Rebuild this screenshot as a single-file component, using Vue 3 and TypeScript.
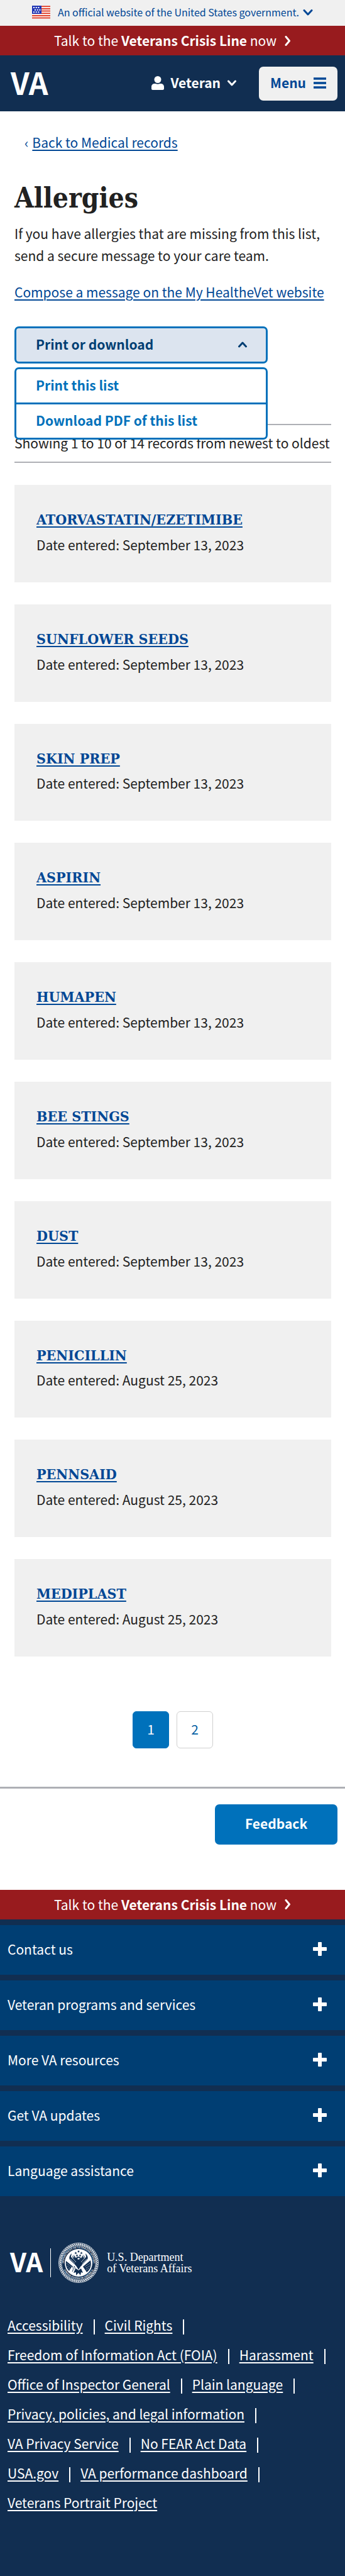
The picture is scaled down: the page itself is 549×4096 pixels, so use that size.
<script setup lang="ts">
import { ref } from 'vue'

interface Allergy { name: string; date: string }

const allergies: Allergy[] = [
  { name: 'ATORVASTATIN/EZETIMIBE', date: 'September 13, 2023' },
  { name: 'SUNFLOWER SEEDS', date: 'September 13, 2023' },
  { name: 'SKIN PREP', date: 'September 13, 2023' },
  { name: 'ASPIRIN', date: 'September 13, 2023' },
  { name: 'HUMAPEN', date: 'September 13, 2023' },
  { name: 'BEE STINGS', date: 'September 13, 2023' },
  { name: 'DUST', date: 'September 13, 2023' },
  { name: 'PENICILLIN', date: 'August 25, 2023' },
  { name: 'PENNSAID', date: 'August 25, 2023' },
  { name: 'MEDIPLAST', date: 'August 25, 2023' },
]

const sections: string[] = [
  'Contact us',
  'Veteran programs and services',
  'More VA resources',
  'Get VA updates',
  'Language assistance',
]

const legalLinks: string[] = [
  'Accessibility',
  'Civil Rights',
  'Freedom of Information Act (FOIA)',
  'Harassment',
  'Office of Inspector General',
  'Plain language',
  'Privacy, policies, and legal information',
  'VA Privacy Service',
  'No FEAR Act Data',
  'USA.gov',
  'VA performance dashboard',
  'Veterans Portrait Project',
]

const menuOpen = ref(true)
const page = ref(1)

// Angles of the rope strands around the seal
const strands: number[] = Array.from({ length: 60 }, (_, i) => i * 6)
// Centres of the five stars at the top of the seal
const stars: [number, number][] = [[32, 14], [27.5, 16.5], [36.5, 16.5], [29.5, 20.5], [34.5, 20.5]]
</script>

<template>
  <div class="page">
    <button class="gov" type="button">
      <svg class="flag" viewBox="0 0 29 21" aria-hidden="true">
        <rect width="29" height="21" fill="#fff" />
        <path d="M0 1.200h29M0 4.900h29M0 8.500h29M0 12.200h29M0 15.900h29M0 19.500h29" stroke="#e0402a" stroke-width="2" />
        <rect width="15" height="13" fill="#1f35b4" />
        <path d="M2 3h10M4 6.700h10M2 10.300h10" stroke="#fff" stroke-width="2" stroke-dasharray="2 1.700" />
      </svg>
      <span>An official website of the United States government.</span>
      <svg class="chev" viewBox="0 0 16 10" aria-hidden="true"><path d="M2 1.500l6 6.500 6-6.500" /></svg>
    </button>

    <a class="crisis" href="#">
      <span>Talk to the <strong>Veterans Crisis Line</strong> now</span>
      <svg viewBox="0 0 10 16" aria-hidden="true"><path d="M2 1.500l5.500 6.500-5.500 6.500" /></svg>
    </a>

    <header class="top">
      <a class="va" href="#">VA</a>
      <button class="user" type="button">
        <svg class="person" viewBox="0 0 20 22" aria-hidden="true">
          <circle cx="10" cy="5.500" r="5.500" />
          <path d="M5 12h1.500c2.200 1.100 4.800 1.100 7 0H15c3 0 5 2.300 5 5v3c0 1.200-.8 2-2 2H2c-1.200 0-2-.8-2-2v-3c0-2.700 2-5 5-5z" />
        </svg>
        <span>Veteran</span>
        <svg class="chev" viewBox="0 0 16 10" aria-hidden="true"><path d="M2.500 2l5.500 6 5.500-6" /></svg>
      </button>
      <button class="menu" type="button">
        <span>Menu</span>
        <svg viewBox="0 0 20 18" aria-hidden="true"><path d="M0 2h20M0 9h20M0 16h20" stroke-width="3.400" /></svg>
      </button>
    </header>

    <main class="main">
      <nav class="crumb">
        <span aria-hidden="true">‹</span>
        <a href="#">Back to Medical records</a>
      </nav>
      <h1>Allergies</h1>
      <p class="intro">If you have allergies that are missing from this list, send a secure message to your care team.</p>
      <p class="compose"><a href="#">Compose a message on the My HealtheVet website</a></p>

      <div class="dropdown">
        <button class="toggle" type="button" :aria-expanded="menuOpen" @click="menuOpen = !menuOpen">
          <span>Print or download</span>
          <svg class="chev" viewBox="0 0 16 10" aria-hidden="true"><path d="M2.500 8l5.500-6 5.500 6" /></svg>
        </button>
        <ul v-if="menuOpen" class="options">
          <li><button type="button">Print this list</button></li>
          <li><button type="button">Download PDF of this list</button></li>
        </ul>
      </div>

      <p class="showing">Showing 1 to 10 of 14 records from newest to oldest</p>

      <ul class="cards">
        <li v-for="a in allergies" :key="a.name" class="card">
          <h2><a href="#">{{ a.name }}</a></h2>
          <p>Date entered: {{ a.date }}</p>
        </li>
      </ul>

      <nav class="pages" aria-label="Pagination">
        <button v-for="n in 2" :key="n" type="button" :class="{ current: n === page }" @click="page = n">{{ n }}</button>
      </nav>
    </main>

    <div class="feedback"><button type="button">Feedback</button></div>

    <a class="crisis" href="#">
      <span>Talk to the <strong>Veterans Crisis Line</strong> now</span>
      <svg viewBox="0 0 10 16" aria-hidden="true"><path d="M2 1.500l5.500 6.500-5.500 6.500" /></svg>
    </a>

    <footer class="footer">
      <ul class="sections">
        <li v-for="s in sections" :key="s">
          <button type="button">
            <span>{{ s }}</span>
            <svg viewBox="0 0 22 22" aria-hidden="true">
              <rect x="8" width="6" height="22" rx="1" />
              <rect y="8" width="22" height="6" rx="1" />
            </svg>
          </button>
        </li>
      </ul>

      <a class="brand" href="#">
        <span class="va small">VA</span>
        <span class="bar"></span>
        <svg class="seal" viewBox="0 0 64 64" aria-hidden="true">
          <defs>
            <path id="arc-top" d="M9.100 37A23.440 23.440 0 1 1 54.900 37" />
            <path id="arc-bottom" d="M7 39A25.960 25.960 0 0 0 57 39" />
            <path id="star" d="M0-2.200L.6-.7 2.100-.7.9.3 1.300 1.800 0 .9-1.300 1.800-.9.3-2.100-.7-.6-.7z" />
          </defs>
          <circle cx="32" cy="32" r="31.500" fill="none" stroke="#fff" stroke-width=".8" />
          <g stroke="#fff" stroke-width="1.500">
            <line v-for="t in strands" :key="t" x1="31" y1="1.400" x2="33.400" y2="4.200" :transform="`rotate(${t} 32 32)`" />
          </g>
          <circle cx="32" cy="32" r="27.200" fill="none" stroke="#fff" stroke-width=".7" />
          <text class="rim"><textPath href="#arc-top" startOffset="50%">DEPARTMENT OF VETERANS AFFAIRS</textPath></text>
          <text class="rim"><textPath href="#arc-bottom" startOffset="50%">UNITED STATES OF AMERICA</textPath></text>
          <circle cx="32" cy="32" r="22" fill="#fff" />
          <g fill="#112e51">
            <use v-for="s in stars" :key="s.join()" href="#star" :x="s[0]" :y="s[1]" />
            <path d="M21 17c-4 4-5 8-2 11l8 8 5 3 2-4-4-6c-1-4-4-7-6-10l1 6-3-5 1 6-3-4z" />
            <path d="M43 17c4 4 5 8 2 11l-7 8-6 3-2-4 4-6c1-4 4-7 6-10l-1 6 3-5-1 6 3-4z" />
            <path d="M28 24c3-3 7-2 8 1l-2 4 3 6-5 8-5-8 3-6-4-2z" />
            <path d="M12 29l10 8-5 8c-4-4-6-10-5-16z" />
            <path d="M51 28l-12 10 6 9c6-4 8-12 6-19z" />
            <path d="M28 41l4 3 4-3 3 7-3-1-1 5-3-4-4 4v-5l-4 1z" />
          </g>
          <g fill="none" stroke="#fff" stroke-width=".7">
            <path d="M20 22l8 9M19 26l7 7M44 22l-8 9M45 26l-7 7" />
            <path d="M13 33l7 5M14 37l5 4M16 41l3 2M50 33l-8 5M50 37l-7 4M48 41l-5 3" stroke-dasharray="1 1" />
          </g>
          <path d="M13 25l13 11M50 24L38 36" stroke="#fff" stroke-width="2" stroke-linecap="round" />
          <path d="M30 25l3-1 1 2-3 1z" fill="#fff" />
          <path d="M22 37c2 3 2 6 0 9M25 37c2 4 2 7 0 10" fill="none" stroke="#112e51" stroke-width="1" />
        </svg>
        <span class="dept">U.S. Department<br />of Veterans Affairs</span>
      </a>

      <ul class="legal">
        <li v-for="l in legalLinks" :key="l"><a href="#">{{ l }}</a></li>
      </ul>
    </footer>
  </div>
</template>

<style>
html { background: #fff; }
body { margin: 0; }
</style>

<style scoped>
.page {
  font-family: "Noto Sans CJK SC", "Noto Sans", sans-serif;
  font-size: 21px;
  line-height: 35px;
  color: #212121;
  background: #fff;
}
* { box-sizing: border-box; }
button { font: inherit; color: inherit; border: 0; background: none; padding: 0 0 2px; cursor: pointer; }
ul { list-style: none; margin: 0; padding: 0; }
p, h1, h2 { margin: 0; }
a { color: #004795; text-decoration-thickness: 2px; text-underline-offset: 3px; }
svg { display: block; flex: none; }
.chev { width: 16px; height: 10px; fill: none; stroke: currentColor; stroke-width: 3; stroke-linecap: round; stroke-linejoin: round; }

.gov {
  width: 100%; height: 41px; display: flex; align-items: center; justify-content: center;
  background: #f0f0f0; color: #004795; font-size: 16px; gap: 6px;
}
.flag { width: 29px; height: 21px; margin-right: 6px; }

.crisis {
  height: 47px; display: flex; align-items: center; justify-content: center; gap: 13px;
  background: #981b1e; color: #fff; text-decoration: none;
}
.crisis svg { width: 10px; height: 16px; fill: none; stroke: #fff; stroke-width: 3; stroke-linecap: round; stroke-linejoin: round; }

.top { height: 89px; display: flex; align-items: center; padding: 0 12px 0 17px; background: #112e51; color: #fff; }
.va { padding-bottom: 6px; font-weight: 700; font-size: 48px; line-height: 48px; color: #fff; text-decoration: none; }
.user { display: flex; align-items: center; gap: 10px; margin-left: auto; margin-right: 35px; font-weight: 700; }
.person { width: 20px; height: 22px; fill: #fff; }
.menu {
  height: 54px; display: flex; align-items: center; gap: 12px; padding: 0 18px 2px;
  border-radius: 7px; background: #f0f0f0; color: #004795; font-weight: 700;
}
.menu svg { width: 20px; height: 18px; stroke: currentColor; }

.main { padding: 32px 22px 0 23px; }
.crumb { display: flex; gap: 6px; padding-left: 16px; color: #004795; }
h1 { margin-top: 43px; font-family: "DejaVu Serif Condensed", "DejaVu Serif", serif; font-size: 44px; line-height: 55px; font-weight: 700; }
.intro { margin-top: 12px; }
.compose { margin-top: 23px; }

.dropdown { position: relative; width: 403px; max-width: 100%; margin-top: 37px; font-weight: 700; }
.toggle {
  width: 100%; height: 59px; display: flex; align-items: center; justify-content: space-between;
  padding: 0 29px 2px 31px; border: 3px solid #0071bb; border-radius: 7px; background: #dce4ef; color: #003e73;
}
.options {
  position: absolute; top: 65px; left: 0; right: 0;
  border: 3px solid #0071bb; border-radius: 7px; background: #fff; color: #0071bb;
}
.options li + li { border-top: 3px solid #0071bb; }
.options button { display: block; width: 100%; height: 53px; padding-left: 31px; text-align: left; }

.showing { margin-top: 96px; padding: 11px 0 12px; border-top: 2px solid #aeb0b5; border-bottom: 2px solid #aeb0b5; white-space: nowrap; }
.cards { display: grid; gap: 35px; margin-top: 35px; }
.card { padding: 37px 35px 42px; background: #f0f0f0; }
.card h2 { font-family: "DejaVu Serif Condensed", "DejaVu Serif", serif; font-size: 23px; line-height: 1.6; }
.card p { margin-top: 4px; }

.pages { display: flex; justify-content: center; gap: 12px; margin-top: 87px; }
.pages button { width: 58px; height: 59px; border: 1px solid #d0d0d0; border-radius: 6px; color: #005ea2; }
.pages .current { border-color: #0071bb; background: #0071bb; color: #fff; }

.feedback { display: flex; justify-content: flex-end; margin-top: 61px; padding: 25px 12px 72px; border-top: 3px solid #aeb0b5; }
.feedback button { width: 195px; height: 64px; border-radius: 7px; background: #0071bb; color: #fff; font-weight: 700; }

.footer { padding-bottom: 90px; background: #112e51; color: #fff; }
.sections li { padding-top: 9px; }
.sections button { width: 100%; height: 79px; display: flex; align-items: center; justify-content: space-between; padding: 0 29px 2px 12px; background: #003e73; text-align: left; }
.sections svg { width: 22px; height: 22px; fill: #fff; }

.brand { display: flex; align-items: center; margin: 74px 12px 0; padding-left: 4px; color: #fff; text-decoration: none; }
.small { font-size: 42px; line-height: 42px; }
.bar { width: 1px; height: 46px; margin: 0 12px; background: #fff; }
.seal { width: 64px; height: 64px; }
.rim { fill: #fff; font-family: "Liberation Serif", serif; font-size: 4px; font-weight: 700; text-anchor: middle; }
.dept { margin-left: 13px; font-family: "Liberation Serif", serif; font-size: 18px; line-height: 18px; }

.legal { display: flex; flex-wrap: wrap; margin-top: 47px; padding: 0 12px; }
.legal li { display: flex; align-items: center; height: 47px; }
.legal a { padding-bottom: 6px; color: #fff; }
.legal li:not(:last-child)::after { content: ""; width: 2px; height: 24px; margin: 0 16px 0 17px; background: #fff; }
</style>
